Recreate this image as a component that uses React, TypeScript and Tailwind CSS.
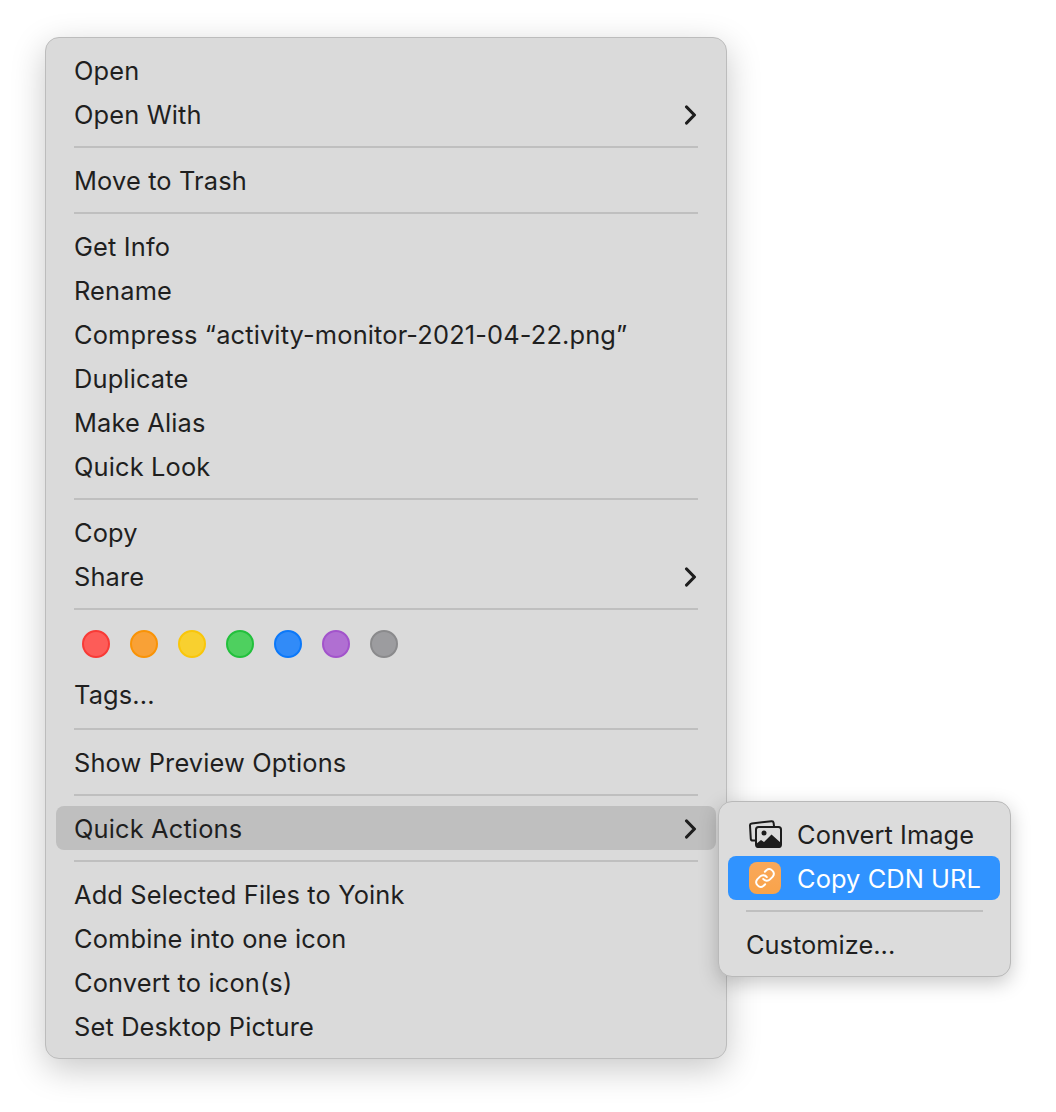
const font = "font-['Inter','Noto_Sans',sans-serif]";

function Chevron() {
  return (
    <svg width="14" height="20" viewBox="0 0 14 20" fill="none" className="text-[#1e1e1e]">
      <path d="M2.6 2 L10.4 10 L2.6 18" stroke="currentColor" strokeWidth="3.2" strokeLinecap="round" strokeLinejoin="round" />
    </svg>
  );
}

function Item({ label, arrow, active }: { label: string; arrow?: boolean; active?: boolean }) {
  return (
    <div className={`h-11 mx-[10px] pl-[18px] pr-[19px] rounded-lg flex items-center justify-between ${active ? "bg-[#bfbfbf]" : ""}`}>
      <span className="pt-[2px] text-[25.4px] tracking-[0.15px] whitespace-nowrap text-[#1f1f1f]">{label}</span>
      {arrow && <span className="mr-[-1px] mt-[1px] flex"><Chevron /></span>}
    </div>
  );
}

function Sep() {
  return <div className="h-[2px] my-[10px] mx-[28px] bg-[#bfbfbf]" />;
}

const tagColors = [
  "bg-[#fd5c58] border-[#f83a36]",
  "bg-[#f9a136] border-[#f99306]",
  "bg-[#f8d02f] border-[#f9c60a]",
  "bg-[#4ed05f] border-[#22c03c]",
  "bg-[#318bf8] border-[#0b78f9]",
  "bg-[#b06fd2] border-[#a253cb]",
  "bg-[#9c9c9f] border-[#8a8a8c]",
];

function ImagesIcon() {
  return (
    <svg width="33" height="28" viewBox="0 0 33 28" fill="none" className="shrink-0">
      <path d="M6 20.5 L3.8 20.5 Q2 20.5 1.8 18.8 L1 5.5 Q0.9 3.6 2.8 3.4 L22.5 1.2 Q24.3 1 24.6 2.8 L25 6" stroke="#1d1d1d" strokeWidth="2" strokeLinecap="round" />
      <rect x="7" y="7" width="25" height="20" rx="2.5" stroke="#1d1d1d" strokeWidth="2" />
      <circle cx="15" cy="13" r="2.5" fill="#1d1d1d" />
      <path d="M7 25 L7 24 L12 20 L15 22 L22.5 14.5 L32 23 L32 25 Q32 28 29.5 28 L9.5 28 Q7 28 7 25 Z" fill="#1d1d1d" />
    </svg>
  );
}

function LinkBadge() {
  return (
    <div className="shrink-0 w-8 h-8 rounded-lg bg-gradient-to-b from-[#f9a85a] to-[#f9a34a] flex items-center justify-center">
      <svg width="22" height="22" viewBox="0 0 24 24" fill="none" stroke="#fff" strokeWidth="2.1" strokeLinecap="round" strokeLinejoin="round">
        <path d="M10 13a5 5 0 0 0 7.5.5l3-3a5 5 0 0 0-7-7l-1.7 1.7" />
        <path d="M14 11a5 5 0 0 0-7.5-.5l-3 3a5 5 0 0 0 7 7l1.7-1.7" />
      </svg>
    </div>
  );
}

function Submenu() {
  return (
    <div className="absolute left-[718px] top-[801px] w-[293px] pt-[10px] pb-[10px] rounded-[14px] bg-[#dcdcdc] border border-[#b9b9b9] shadow-[0_6px_20px_rgba(0,0,0,0.22)]">
      <div className="h-11 ml-[9px] mr-[10px] px-[21px] flex items-center gap-[15px]">
        <ImagesIcon />
        <span className="pt-[2px] text-[25.4px] tracking-[0.08px] whitespace-nowrap text-[#1f1f1f]">Convert Image</span>
      </div>
      <div className="h-11 ml-[9px] mr-[10px] px-[21px] rounded-lg bg-[#3093ff] flex items-center gap-[16px]">
        <LinkBadge />
        <span className="pt-[2px] text-[25.4px] tracking-[0.08px] whitespace-nowrap text-white">Copy CDN URL</span>
      </div>
      <div className="h-[2px] my-[10px] mx-[27px] bg-[#bfbfbf]" />
      <div className="h-11 ml-[9px] mr-[10px] px-[18px] flex items-center">
        <span className="pt-[2px] text-[25.4px] tracking-[0.02px] whitespace-nowrap text-[#1f1f1f]">Customize...</span>
      </div>
    </div>
  );
}

export default function App() {
  return (
    <div className={`relative w-[1056px] h-[1112px] bg-white overflow-hidden pt-[37px] pl-[45px] ${font}`}>
      <div className="w-[682px] pt-[10px] pb-[10px] rounded-[14px] bg-[#dadada] border border-[#bcbcbc] shadow-[0_10px_34px_rgba(0,0,0,0.22)]">
        <Item label="Open" />
        <Item label="Open With" arrow />
        <Sep />
        <Item label="Move to Trash" />
        <Sep />
        <Item label="Get Info" />
        <Item label="Rename" />
        <Item label="Compress “activity-monitor-2021-04-22.png”" />
        <Item label="Duplicate" />
        <Item label="Make Alias" />
        <Item label="Quick Look" />
        <Sep />
        <Item label="Copy" />
        <Item label="Share" arrow />
        <Sep />
        <div className="h-[52px] pl-[36px] pt-[10px] flex items-start gap-5">
          {tagColors.map((c) => (
            <div key={c} className={`w-7 h-7 rounded-full border-2 ${c}`} />
          ))}
        </div>
        <div className="pb-[2px]">
          <Item label="Tags..." />
        </div>
        <Sep />
        <Item label="Show Preview Options" />
        <Sep />
        <Item label="Quick Actions" arrow active />
        <Sep />
        <Item label="Add Selected Files to Yoink" />
        <Item label="Combine into one icon" />
        <Item label="Convert to icon(s)" />
        <Item label="Set Desktop Picture" />
      </div>
      <Submenu />
    </div>
  );
}
